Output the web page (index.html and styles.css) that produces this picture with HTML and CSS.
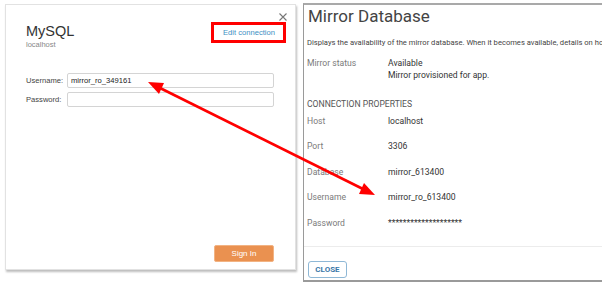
FILE: index.html
```html
<!DOCTYPE html>
<html lang="en">
<head>
  <meta charset="UTF-8">
  <title>MySQL mirror connection</title>
  <link rel="stylesheet" href="styles.css">
</head>
<body>

  <div id="stage">

    <div id="login">
      <a href="#" class="close_x">
        <svg width="8" height="8" viewBox="0 0 8 8"><path d="M0.5 0.5 L7.5 7.5 M7.5 0.5 L0.5 7.5" stroke="#777" stroke-width="1.1" fill="none"/></svg>
      </a>
      <div class="login_head">
        <div class="brand">
          <p class="brand_name">MySQL</p>
          <p class="brand_host">localhost</p>
        </div>
        <a href="#" class="edit_link">Edit connection</a>
      </div>

      <form class="login_form">
        <label class="field">
          <span class="field_label">Username:</span>
          <input type="text" class="field_input" value="mirror_ro_349161">
        </label>
        <label class="field">
          <span class="field_label">Password:</span>
          <input type="password" class="field_input">
        </label>
      </form>

      <a href="#" class="sign_in">Sign In</a>
    </div>

    <div id="mirror">
      <div class="mirror_body">
        <h1 class="mirror_title">Mirror Database</h1>
        <p class="mirror_desc">Displays the availability of the mirror database. When it becomes available, details on how to connect to it are shown.</p>

        <div class="status">
          <span class="prop_label">Mirror status</span>
          <div class="prop_value">
            <p>Available</p>
            <p>Mirror provisioned for app.</p>
          </div>
        </div>

        <h2 class="props_head">CONNECTION PROPERTIES</h2>

        <div class="prop_row"><span class="prop_label">Host</span><span class="prop_value">localhost</span></div>
        <div class="prop_row"><span class="prop_label">Port</span><span class="prop_value">3306</span></div>
        <div class="prop_row"><span class="prop_label">Database</span><span class="prop_value">mirror_613400</span></div>
        <div class="prop_row"><span class="prop_label">Username</span><span class="prop_value">mirror_ro_613400</span></div>
        <div class="prop_row"><span class="prop_label">Password</span><span class="prop_value">********************</span></div>
      </div>

      <div class="mirror_foot">
        <a href="#" class="close_btn">CLOSE</a>
      </div>
    </div>

  </div>

  <!-- annotation arrow between the two usernames -->
  <svg class="arrow" width="602" height="288" viewBox="0 0 602 288">
    <line x1="158" y1="87" x2="365" y2="190" stroke="#f00" stroke-width="2.6"/>
    <polygon points="148,82 164,83 159,94" fill="#f00"/>
    <polygon points="375,195 359,194 364,183" fill="#f00"/>
  </svg>

</body>
</html>
```

FILE: styles.css
```css
body {
  margin: 0;
  width: 602px;
  height: 288px;
  overflow: hidden;
  position: relative;
  background: #fff;
}

p, h1, h2 {
  margin: 0;
}

#stage {
  display: flex;
  align-items: flex-start;
  gap: 7px;
  padding: 3px 0 0 5px;
}

/* left: sign in dialog */
#login {
  position: relative;
  flex-shrink: 0;
  width: 291px;
  height: 266px;
  margin-top: 1px;
  box-sizing: border-box;
  padding: 17px 9px 7px 20px;
  border: 1px solid #e2e2e2;
  box-shadow: 1px 2px 2px #bdbdbd;
  display: flex;
  flex-direction: column;
  font-family: "Liberation Sans", Arial, sans-serif;
  background: #fff;
}

.close_x {
  position: absolute;
  top: 8px;
  right: 8px;
  line-height: 0;
}

.login_head {
  display: flex;
  justify-content: space-between;
  align-items: flex-start;
}

.brand_name {
  font-size: 14.5px;
  line-height: 17px;
  margin-top: 1px;
  color: #333;
}

.brand_host {
  font-size: 7.5px;
  line-height: 9px;
  color: #888;
}

.edit_link {
  display: block;
  border: 3px solid #f00;
  padding: 0 9px;
  width: 51px;
  height: 15px;
  line-height: 15px;
  font-size: 7.6px;
  color: #3e8fc3;
  text-decoration: none;
  white-space: nowrap;
  text-align: center;
}

.login_form {
  margin: 24px 12px 0 0;
  display: flex;
  flex-direction: column;
  gap: 4px;
}

.field {
  display: flex;
  align-items: center;
}

.field_label {
  width: 41px;
  font-size: 7.6px;
  color: #444;
}

.field_input {
  flex: 1;
  height: 15px;
  box-sizing: border-box;
  margin: 0;
  padding: 0 0 0 3px;
  border: 1px solid #d4d4d4;
  border-radius: 2px;
  font-family: "Liberation Sans", Arial, sans-serif;
  font-size: 7.6px;
  color: #222;
  outline: none;
}

.sign_in {
  margin: auto 12px 0 0;
  align-self: flex-end;
  width: 58px;
  height: 15px;
  line-height: 15px;
  text-align: center;
  background: #ea9150;
  border: 1px solid #f2b383;
  border-radius: 2px;
  color: #fff;
  font-size: 8px;
  text-decoration: none;
}

/* right: mirror database panel */
#mirror {
  flex-shrink: 0;
  width: 330px;
  height: 279px;
  box-sizing: border-box;
  border-top: 2px solid #a9a9a9;
  border-left: 1px solid #9a9a9a;
  border-bottom: 2px solid #9a9a9a;
  display: flex;
  flex-direction: column;
  font-family: Roboto, "Liberation Sans", sans-serif;
}

.mirror_body {
  flex: 1;
  padding: 0 0 0 3px;
}

.mirror_title {
  font-size: 17px;
  font-weight: normal;
  line-height: 20px;
  margin: 1px 0 0 1px;
  color: #444;
}

.mirror_desc {
  margin-top: 12px;
  font-size: 7.6px;
  line-height: 9px;
  color: #444;
  white-space: nowrap;
}

.status {
  display: flex;
  margin-top: 10px;
  font-size: 8.6px;
  line-height: 12px;
}

.prop_label {
  width: 81px;
  flex-shrink: 0;
  color: #7a7a7a;
}

.prop_value {
  color: #333;
}

.props_head {
  margin: 17px 0 -2px 0;
  font-size: 8.6px;
  font-weight: normal;
  line-height: 12px;
  color: #555;
}

.prop_row {
  display: flex;
  align-items: center;
  height: 25.5px;
  font-size: 8.6px;
}

.mirror_foot {
  border-top: 1px solid #ececec;
  padding: 10px 0 2px 4px;
}

.close_btn {
  display: inline-block;
  width: 39px;
  height: 17px;
  box-sizing: border-box;
  line-height: 15px;
  text-align: center;
  border: 1px solid #8fb8d6;
  border-radius: 3px;
  color: #3a78a8;
  font-size: 8px;
  font-weight: bold;
  text-decoration: none;
}

.arrow {
  position: absolute;
  top: 0;
  left: 0;
  pointer-events: none;
}
```
